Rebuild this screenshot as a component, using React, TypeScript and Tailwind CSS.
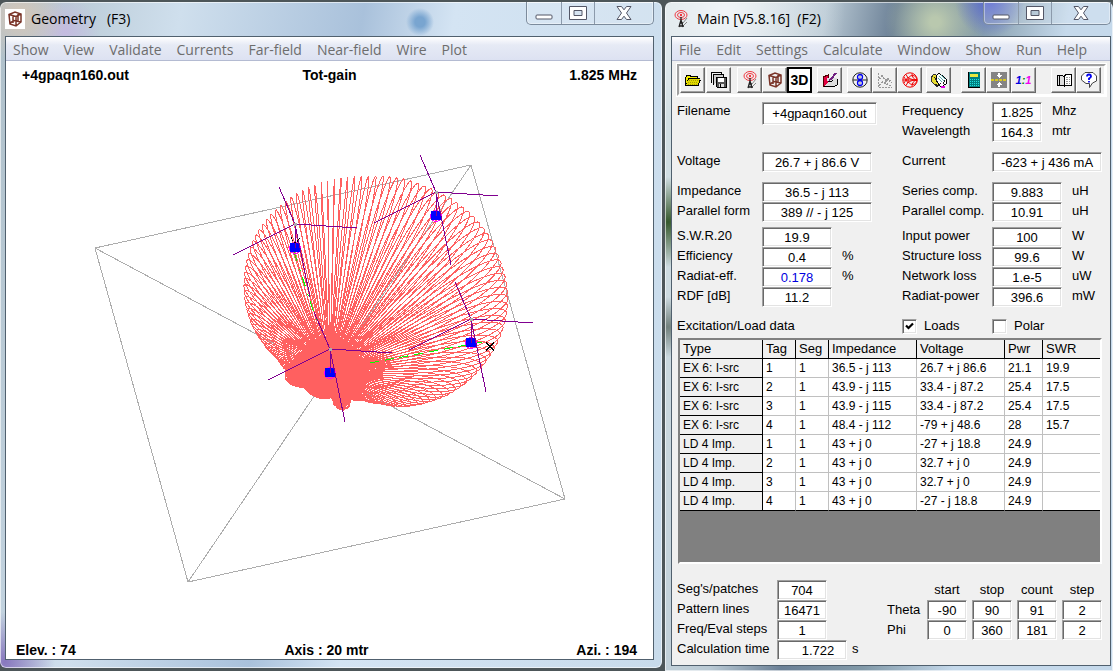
import { useId } from 'react';
import type { ReactNode } from 'react';

type Point = [number, number];

const ORIGIN: Point = [330, 373];

const OUTLINE: Point[] = [
  [508, 300], [505, 322], [497, 343], [485, 362], [470, 378], [452, 391], [430, 400], [408, 405],
  [385, 403], [365, 400], [351, 399], [349, 407], [343, 410], [336, 407], [331, 398], [314, 396],
  [304, 387], [291, 384], [285, 378], [286, 370], [277, 358], [262, 341], [250, 320], [244, 292],
  [246, 265], [254, 239], [268, 219], [285, 203], [304, 191], [330, 182], [352, 179], [380, 178],
  [405, 181], [430, 190], [452, 201], [473, 217], [490, 238], [501, 263], [507, 285],
];

const polar = OUTLINE.map(([x, y]) => {
  const dx = x - ORIGIN[0];
  const dy = ORIGIN[1] - y;
  return { a: (Math.atan2(dy, dx) * 180 / Math.PI + 360) % 360, r: Math.hypot(dx, dy) };
}).sort((p, q) => p.a - q.a);

function radiusAt(angle: number) {
  const n = polar.length;
  for (let i = 0; i < n; i++) {
    const p = polar[i];
    const q = polar[(i + 1) % n];
    const span = (q.a - p.a + 360) % 360;
    const off = (angle - p.a + 360) % 360;
    if (off <= span) return p.r + (q.r - p.r) * (off / (span || 1));
  }
  return polar[0].r;
}

function lobe(angle: number) {
  const r = radiusAt(angle);
  const a = (angle * Math.PI) / 180;
  let d = '';
  for (let i = 0; i <= 36; i++) {
    const t = (Math.PI * i) / 36;
    const along = Math.sin(t) * r;
    const lift = 0.14 * r * Math.sin(t) * Math.cos(t);
    const x = ORIGIN[0] + along * Math.cos(a);
    const y = ORIGIN[1] - along * Math.sin(a) - lift;
    d += `${i ? 'L' : 'M'}${x.toFixed(1)} ${y.toFixed(1)}`;
  }
  return d;
}

const LOBES = Array.from({ length: 180 }, (_, i) => lobe(i * 2 + 0.7)).join('');
const MASTS: Point[] = [[295, 224], [436, 192], [471, 319], [330, 349]];

function RadiationPlot() {
  return (
    <svg viewBox="6 89 647 552" className="mx-auto block h-[552px] w-[647px] shrink-0" shapeRendering="crispEdges" fill="none" role="img" aria-label="Total gain pattern">
      <path d="M95 248L471 165L565 499L188 582ZM95 248L565 499M471 165L188 582" stroke="#adadad" />
      <path d={LOBES} stroke="#ff6060" />
      <path d="M286 370L287 380L303 386L313 396L331 398L337 407L344 408L349 399L362 393L366 375L357 352L346 340L330 335L314 342L298 357Z" fill="#ff6060" />
      <path d="M294 252L317 322" stroke="#00ff00" strokeDasharray="10 8 2 6" />
      <path d="M370 363L488 341" stroke="#00ff00" strokeDasharray="9 6" />
      {MASTS.map(([x, y]) => (
        <g key={x}>
          <circle cx={x} cy={y + 24} r="5.5" stroke="#ff00ff" />
          <rect x={x - 5} y={y + 19} width="10" height="9" fill="#0000ff" />
          <path d={`M${x} ${y}l-16 -37M${x} ${y}l62 4M${x} ${y}l15 73M${x} ${y}l-62 31M${x} ${y}v24`} stroke="#800090" />
          <rect x={x - 1} y={y - 1} width="3" height="3" fill="#adadad" />
        </g>
      ))}
      <path d="M486 342L494 351M494 342L486 351" stroke="#000" strokeWidth="1.3" />
      <path d="M291 237v2l3 3h3l2-3v-2" stroke="#000" strokeDasharray="2 1" />
    </svg>
  );
}

function Cube() {
  return (
    <svg viewBox="0 0 16 16" className="h-4 w-4" fill="none" stroke="#7a3428" strokeWidth="1.5">
      <path d="M2 3.5L8 1l6 2v8l-5 4-6-2zM2 3.5L9 5.5l5-2.5M9 5.5V15M6 4v8M11 3v7M3 12l4-2.5L13.500 11" />
    </svg>
  );
}

function Antenna() {
  return (
    <svg viewBox="0 0 16 18" className="h-[18px] w-4" fill="none">
      <g stroke="#f03840">
        <ellipse cx="8" cy="5" rx="6" ry="4.500" />
        <ellipse cx="8" cy="5" rx="3.500" ry="2.500" />
        <path d="M8 4v2" strokeWidth="2" />
      </g>
      <path d="M8 7v4M8 10l-2 7M8 10l2 7M7 13h3M6 16h5" stroke="#222" strokeWidth="1.300" />
      <path d="M10 13l4-5M11 15l3-3" stroke="#888" />
    </svg>
  );
}

function Icon({ children }: { children: ReactNode }) {
  return <svg viewBox="0 0 16 16" className="h-4 w-4" fill="none" shapeRendering="crispEdges">{children}</svg>;
}

const FolderIcon = () => (
  <Icon>
    <path d="M1 3h5v1h7v2h2v2h1v1h-1v2h-1v3H0V5h1z" fill="#000" />
    <path d="M1 5h1V4h3v1h7v1H3v2H2v3H1z" fill="#f4ec00" />
    <path d="M4 7h11l-2 6H1l2-5z" fill="#e0d800" />
    <path d="M4 8.500h10M3 10.500h10M3 12.500h9" stroke="#a8a000" strokeDasharray="1 1" />
  </Icon>
);
const SaveAllIcon = () => (
  <Icon>
    <path d="M.5 10.500v-10h10v2" stroke="#000" strokeWidth="1.500" />
    <path d="M2.500 12.500v-10h10v2" stroke="#000" strokeWidth="1.500" fill="#ccc" />
    <path d="M5 5h10v10H6l-1-1z" fill="#555" stroke="#000" />
    <path d="M7 6h6v4H7z" fill="#fff" />
    <path d="M8 12h5v3H8z" fill="#ddd" />
    <path d="M9 12h1v3H9z" fill="#000" />
  </Icon>
);
const PenIcon = () => (
  <Icon>
    <path d="M1 5l5-2v9l-5 3z" fill="#e00040" stroke="#500000" />
    <path d="M5 6h10v7l-2 1H2l4-3z" fill="#ddd" />
    <path d="M15 7v6l-2 1M2 14.500h11" stroke="#000" />
    <path d="M14 1L9 7l-2 1" stroke="#702080" strokeWidth="2" />
    <path d="M6 9l3 1 2-2" stroke="#000" />
  </Icon>
);
const PolarIcon = () => (
  <svg viewBox="0 0 16 16" className="h-4 w-4" fill="none">
    <circle cx="8" cy="8" r="7.200" stroke="#222" />
    <path d="M1 8h14" stroke="#222" />
    <path d="M8 1v14" stroke="#999" />
    <circle cx="8" cy="5" r="2.500" stroke="#0000f0" strokeWidth="1.300" />
    <circle cx="8" cy="11" r="2.500" stroke="#0000f0" strokeWidth="1.300" />
  </svg>
);
const ChartIcon = () => (
  <Icon>
    <path d="M1 1v14h14" stroke="#999" strokeDasharray="2 1" />
    <path d="M2 7l3-3 4 5 2-2 4 4M2 13l4-3 4 2 5 2" stroke="#999" strokeWidth="1.500" strokeDasharray="2 1" />
  </Icon>
);
const SmithIcon = () => (
  <svg viewBox="0 0 16 16" className="h-4 w-4" fill="none" stroke="#f00000">
    <circle cx="8" cy="8" r="7.200" />
    <circle cx="10.500" cy="8" r="4.500" />
    <path d="M1 8h14M4 2.500Q6 8 15 8Q6 8 4 13.500M10 1.500Q10 7 15 8Q10 9 10 14.500M2 5l4 6M2 11l4-6" />
  </svg>
);
const CardsIcon = () => (
  <Icon>
    <path d="M0 6l3-4 5 3v8l-2 2-5-5z" fill="#e8dc30" stroke="#333" />
    <path d="M5 4l3-3 8 7-1 4-5 3-4-5z" fill="#fff" stroke="#000" />
    <path d="M8 4l5 5M7 6l4 4M10 3l4 4" stroke="#55aaaa" />
    <path d="M3 5l4 5M4 12l3 2 3-3M12 12l2-4" stroke="#222" />
    <path d="M10 15h4" stroke="#e000e0" strokeWidth="2" />
  </Icon>
);
const CalculatorIcon = () => (
  <Icon>
    <path d="M2 0h12v16H2z" fill="#008080" />
    <path d="M2.500 0v16M2 15.500h12" stroke="#000" />
    <path d="M4 2h8v3H4z" fill="#e8e840" />
    <path d="M4 7.500h9M4 9.500h9M4 11.500h9M4 13.500h9" stroke="#20e0e0" strokeDasharray="1 1" />
  </Icon>
);
const SplitIcon = () => (
  <Icon>
    <path d="M0 0h16v16H0z" fill="#848484" />
    <path d="M0 8h16" stroke="#d8c820" strokeWidth="1.500" strokeDasharray="3 1" />
    <path d="M7 1h2v2h2l-3 3-3-3h2zM7 15h2v-2h2l-3-3-3 3h2z" fill="#fff" />
  </Icon>
);
const BookIcon = () => (
  <Icon>
    <path d="M1 3h5l2 2v9l-2-1H1z" fill="#ddd" stroke="#000" />
    <path d="M8 5l2-3h5v11h-5l-2 2z" fill="#fff" stroke="#000" />
    <path d="M3.500 3v10" stroke="#000" />
    <path d="M10 5h4M10 7h4M10 9h4M10 11h4" stroke="#999" strokeDasharray="2 1" />
  </Icon>
);
const HelpIcon = () => (
  <svg viewBox="0 0 16 16" className="h-4 w-4" fill="none">
    <path d="M4 .5h8l3.500 3.500v5l-4 2-3 4.500V11.500H5L.5 8V4z" fill="#fff" stroke="#444" />
    <path d="M6 4.500Q6 2.500 8 2.500T10 4.500Q10 5.500 8 6.500V8M8 9v1.500" stroke="#0000f0" strokeWidth="1.800" />
  </svg>
);
const ThreeD = () => <span className="text-sm leading-4 font-bold">3D</span>;
const Ratio = () => (
  <span className="text-[11px] leading-4 font-bold italic">
    <span className="text-[#0000e0]">1</span><span className="text-[#008000]">:</span><span className="text-[#f000f0]">1</span>
  </span>
);

const TOOL_GROUPS: { gap: string; tools: { name: string; icon: ReactNode }[] }[] = [
  { gap: 'ml-0', tools: [{ name: 'Open', icon: <FolderIcon /> }] },
  { gap: 'ml-px', tools: [{ name: 'Save all', icon: <SaveAllIcon /> }] },
  { gap: 'ml-[6px]', tools: [{ name: 'Main', icon: <Antenna /> }, { name: 'Geometry', icon: <Cube /> }, { name: '3D view', icon: <ThreeD /> }] },
  { gap: 'ml-[5px]', tools: [{ name: 'Edit', icon: <PenIcon /> }] },
  { gap: 'ml-[5px]', tools: [{ name: 'Pattern', icon: <PolarIcon /> }, { name: 'Line chart', icon: <ChartIcon /> }, { name: 'Smith chart', icon: <SmithIcon /> }] },
  { gap: 'ml-1', tools: [{ name: 'Run', icon: <CardsIcon /> }] },
  { gap: 'ml-[10px]', tools: [{ name: 'Calculator', icon: <CalculatorIcon /> }, { name: 'Split', icon: <SplitIcon /> }, { name: 'Scale', icon: <Ratio /> }] },
  { gap: 'ml-[15px]', tools: [{ name: 'Notes', icon: <BookIcon /> }, { name: 'Help', icon: <HelpIcon /> }] },
];

function Toolbar() {
  return (
    <div className="mt-[3px] mr-1 ml-[5px] flex h-8 items-center border-2 border-[#a0a0a0] border-r-white border-b-white pl-px outline outline-white" role="toolbar">
      {TOOL_GROUPS.map((g, i) => (
        <div key={i} className={`flex ${g.gap}`}>
          {g.tools.map((t) => (
            <button
              key={t.name}
              type="button"
              aria-label={t.name}
              className={`flex h-[26px] w-[25px] items-center justify-center ${t.name === '3D view' ? 'border-2 border-black bg-white' : 'border border-white border-r-[#696969] border-b-[#696969] bg-[#f0f0f0] shadow-[inset_-1px_-1px_0_#a0a0a0]'}`}
            >
              {t.icon}
            </button>
          ))}
        </div>
      ))}
    </div>
  );
}

function CaptionButtons() {
  return (
    <div className="flex h-[23px] w-32 rounded-b-[5px] border border-t-0 border-[#7c8b9c] bg-white/15 shadow-[inset_0_0_0_1px_rgba(255,255,255,0.4)]">
      <button type="button" aria-label="Minimize" className="flex w-[35px] items-center justify-center border-r border-[#8c9aab]">
        <svg viewBox="0 0 18 14" className="h-[14px] w-[18px]"><rect x="1" y="9" width="16" height="4" rx="1" fill="#fff" stroke="#535666" /></svg>
      </button>
      <button type="button" aria-label="Maximize" className="flex w-[33px] items-center justify-center border-r border-[#8c9aab]">
        <svg viewBox="0 0 18 14" className="h-[14px] w-[18px]"><path fillRule="evenodd" d="M.5.5h17v13H.5zM5 4.500v5h8v-5z" fill="#fff" stroke="#535666" strokeLinejoin="round" /></svg>
      </button>
      <button type="button" aria-label="Close" className="flex flex-1 items-center justify-center">
        <svg viewBox="0 0 16 14" className="h-[14px] w-4"><path d="M1 .5h4.500L8 3.800 10.500.5H15L10.500 7l4.500 6.500h-4.500L8 10.200 5.500 13.500H1L5.500 7z" fill="#fff" stroke="#535666" strokeLinejoin="round" /></svg>
      </button>
    </div>
  );
}

function TitleBar({ icon, title, hotkey }: { icon: ReactNode; title: string; hotkey: string }) {
  return (
    <header className="flex h-[34px] justify-between">
      <div className="flex items-center">
        {icon}
        <h1 className="ml-[6px] font-['Open_Sans','Noto_Sans',sans-serif] text-sm whitespace-pre text-black">{title}{hotkey}</h1>
      </div>
      <CaptionButtons />
    </header>
  );
}

function MenuBar({ items }: { items: string[] }) {
  return (
    <nav className="flex h-6 items-center gap-[15px] border-b border-[#b4bbd2] bg-linear-to-b from-white from-0% via-[#e6eaf5] via-35% to-[#dde2f2] pt-0.5 pl-[7px] font-['Open_Sans','Noto_Sans',sans-serif] text-sm text-[#6d6d6d]">
      {items.map((m) => <button key={m} type="button" className="whitespace-nowrap">{m}</button>)}
    </nav>
  );
}

const INSET = 'border border-[#a0a0a0] border-r-white border-b-white bg-white shadow-[inset_1px_1px_0_#696969,inset_-1px_-1px_0_#e3e3e3]';

function Value({ id, value, size, label }: { id?: string; value: string; size: string; label?: string }) {
  return <input id={id} aria-label={label} readOnly value={value} className={`${INSET} ${size} text-center outline-none ${value === '0.178' ? 'text-[#0000e0]' : ''}`} />;
}

type Row = { label: string; value: string; size: string; unit?: string; gap?: string };

function Rows({ rows, labelWidth }: { rows: Row[]; labelWidth: string }) {
  const base = useId();
  return (
    <div>
      {rows.map((r, i) => (
        <div key={r.label} className={`flex h-5 ${r.gap ?? ''}`}>
          <label htmlFor={`${base}${i}`} className={`${labelWidth} shrink-0 leading-[18px] whitespace-nowrap`}>{r.label}</label>
          <Value id={`${base}${i}`} value={r.value} size={r.size} />
          {r.unit && <span className={`leading-[18px] ${r.unit === 's' ? 'ml-[5px]' : 'ml-[10px]'}`}>{r.unit}</span>}
        </div>
      ))}
    </div>
  );
}

const LEFT_ROWS: Row[] = [
  { label: 'Filename', value: '+4gpaqn160.out', size: 'h-[23px] w-[115px]' },
  { label: 'Voltage', value: '26.7 + j 86.6 V', size: 'h-5 w-[110px]', gap: 'mt-[30px]' },
  { label: 'Impedance', value: '36.5 - j 113', size: 'h-5 w-[110px]', gap: 'mt-[10px]' },
  { label: 'Parallel form', value: '389 // - j 125', size: 'h-5 w-[110px]' },
  { label: 'S.W.R.20', value: '19.9', size: 'h-5 w-[70px]', gap: 'mt-[5px]' },
  { label: 'Efficiency', value: '0.4', size: 'h-5 w-[70px]', unit: '%' },
  { label: 'Radiat-eff.', value: '0.178', size: 'h-5 w-[70px]', unit: '%' },
  { label: 'RDF [dB]', value: '11.2', size: 'h-5 w-[70px]' },
];
const RIGHT_ROWS: Row[] = [
  { label: 'Frequency', value: '1.825', size: 'h-5 w-[50px]', unit: 'Mhz' },
  { label: 'Wavelength', value: '164.3', size: 'h-5 w-[50px]', unit: 'mtr' },
  { label: 'Current', value: '-623 + j 436 mA', size: 'h-5 w-[110px]', gap: 'mt-[10px]' },
  { label: 'Series comp.', value: '9.883', size: 'h-5 w-[70px]', unit: 'uH', gap: 'mt-[10px]' },
  { label: 'Parallel comp.', value: '10.91', size: 'h-5 w-[70px]', unit: 'uH' },
  { label: 'Input power', value: '100', size: 'h-5 w-[70px]', unit: 'W', gap: 'mt-[5px]' },
  { label: 'Structure loss', value: '99.6', size: 'h-5 w-[70px]', unit: 'W' },
  { label: 'Network loss', value: '1.e-5', size: 'h-5 w-[70px]', unit: 'uW' },
  { label: 'Radiat-power', value: '396.6', size: 'h-5 w-[70px]', unit: 'mW' },
];
const STAT_ROWS: Row[] = [
  { label: "Seg's/patches", value: '704', size: 'h-5 w-[50px]' },
  { label: 'Pattern lines', value: '16471', size: 'h-5 w-[50px]' },
  { label: 'Freq/Eval steps', value: '1', size: 'h-5 w-[50px]' },
  { label: 'Calculation time', value: '1.722', size: 'h-5 w-[70px] pl-3', unit: 's' },
];

const HEAD = ['Type', 'Tag', 'Seg', 'Impedance', 'Voltage', 'Pwr', 'SWR'];
const DATA = [
  ['EX 6: I-src', '1', '1', '36.5 - j 113', '26.7 + j 86.6', '21.1', '19.9'],
  ['EX 6: I-src', '2', '1', '43.9 - j 115', '33.4 - j 87.2', '25.4', '17.5'],
  ['EX 6: I-src', '3', '1', '43.9 - j 115', '33.4 - j 87.2', '25.4', '17.5'],
  ['EX 6: I-src', '4', '1', '48.4 - j 112', '-79 + j 48.6', '28', '15.7'],
  ['LD 4 Imp.', '1', '1', '43 + j 0', '-27 + j 18.8', '24.9', ''],
  ['LD 4 Imp.', '2', '1', '43 + j 0', '32.7 + j 0', '24.9', ''],
  ['LD 4 Imp.', '3', '1', '43 + j 0', '32.7 + j 0', '24.9', ''],
  ['LD 4 Imp.', '4', '1', '43 + j 0', '-27 - j 18.8', '24.9', ''],
];

function LoadTable() {
  return (
    <div className="mt-px mr-2 ml-[6px] h-[226px] border-2 border-[#808080] border-r-white border-b-white bg-[#808080]">
      <table className="w-full table-fixed border-separate border-spacing-0 bg-white text-left">
        <colgroup>
          <col className="w-[83px]" /><col className="w-[33px]" /><col className="w-[33px]" />
          <col className="w-[88px]" /><col className="w-[88px]" /><col className="w-[38px]" /><col />
        </colgroup>
        <thead>
          <tr className="h-[19px]">
            {HEAD.map((h) => <th key={h} className="border-r border-b border-black bg-[#f0f0f0] p-0 pl-[3px] text-[13px] leading-[18px] font-normal last:border-r-0">{h}</th>)}
          </tr>
        </thead>
        <tbody>
          {DATA.map((row, i) => (
            <tr key={i} className="group h-[19px]">
              <th scope="row" className="border-r border-b border-black bg-[#f0f0f0] p-0 pl-[3px] text-xs leading-[18px] font-normal">{row[0]}</th>
              {row.slice(1).map((c, j) => <td key={j} className="border-r border-b border-[#c0c0c0] p-0 pl-[3px] text-xs leading-[18px] whitespace-nowrap group-last:border-b-black last:border-r-0">{c}</td>)}
            </tr>
          ))}
        </tbody>
      </table>
    </div>
  );
}

function Check({ label, on }: { label: string; on?: boolean }) {
  return (
    <label className="flex w-[90px] items-center gap-[7px]">
      <span className="grid">
        <input type="checkbox" defaultChecked={on} className={`peer col-start-1 row-start-1 h-[15px] w-[15px] appearance-none ${INSET}`} />
        <svg viewBox="0 0 15 15" className="pointer-events-none invisible col-start-1 row-start-1 h-[15px] w-[15px] peer-checked:visible"><path d="M4 6.500l2.500 2.500L11 4.500" fill="none" stroke="#000" strokeWidth="2.200" /></svg>
      </span>
      {label}
    </label>
  );
}

const RANGE = [
  { name: 'Theta', values: ['-90', '90', '91', '2'] },
  { name: 'Phi', values: ['0', '360', '181', '2'] },
];
const RANGE_HEAD = ['start', 'stop', 'count', 'step'];

function RangeGrid() {
  return (
    <div className="mr-2 grid grid-cols-[35px_repeat(4,40px)] grid-rows-[20px_20px_20px] gap-x-[5px]">
      <span />
      {RANGE_HEAD.map((h) => <span key={h} className="text-center leading-5">{h}</span>)}
      {RANGE.map((r) => [
        <span key={r.name} className="leading-5">{r.name}</span>,
        ...r.values.map((v, i) => <Value key={r.name + i} label={`${r.name} ${RANGE_HEAD[i]}`} value={v} size="h-5 w-10" />),
      ])}
    </div>
  );
}

export default function App() {
  return (
    <div className="flex min-h-screen gap-[3px] bg-[#4d5659] pt-[2px] font-['Liberation_Sans',Arial,sans-serif] text-[13px] text-black">
      <section className="mb-[3px] flex min-w-0 flex-1 flex-col rounded-t-md rounded-b-md bg-[#bdcddd] bg-[radial-gradient(circle_at_20px_15px,#d6c7b8_0px,transparent_45px),radial-gradient(circle_at_65px_30px,#c4bbe0_0px,transparent_35px),radial-gradient(circle_at_420px_20px,#79a5d0_5px,transparent_14px),radial-gradient(circle_at_5px_660px,#8878be_0px,transparent_50px),linear-gradient(100deg,#aebfc9_0px,#cfdfed_180px,#a9c1db_360px,#d4e4f3_450px,#c8dbeb_100%)] pr-2 pb-2 pl-[5px] shadow-[inset_0_0_0_1px_rgba(255,255,255,0.6)]">
        <TitleBar icon={<span className="flex h-5 w-5 items-center justify-center bg-white"><Cube /></span>} title="Geometry" hotkey="   (F3)" />
        <div className="flex flex-1 flex-col border border-[#50606e] bg-white">
          <MenuBar items={['Show', 'View', 'Validate', 'Currents', 'Far-field', 'Near-field', 'Wire', 'Plot']} />
          <div className="grid h-7 grid-cols-3 items-center px-4 text-sm font-bold">
            <span>+4gpaqn160.out</span><span className="text-center">Tot-gain</span><span className="text-right">1.825 MHz</span>
          </div>
          <div className="flex flex-1 overflow-hidden"><RadiationPlot /></div>
          <div className="grid h-[18px] grid-cols-3 items-center pr-4 pl-[10px] text-sm leading-[18px] font-bold">
            <span>Elev. : 74</span><span className="text-center">Axis : 20 mtr</span><span className="text-right">Azi. : 194</span>
          </div>
        </div>
      </section>

      <section className="flex w-[448px] shrink-0 flex-col rounded-t-md bg-[#c5d8e8] bg-[radial-gradient(circle_at_60px_10px,#f1f5f8_0px,transparent_120px),radial-gradient(circle_at_325px_0px,#5868cf_0px,transparent_35px),radial-gradient(circle_at_270px_20px,#b9c8ae_5px,transparent_50px),radial-gradient(circle_at_3px_220px,#35582b_0px,transparent_45px),radial-gradient(circle_at_3px_325px,#71807c_0px,transparent_30px),linear-gradient(100deg,#d7e3e6_0px,#b9c9d4_160px,#6b8096_230px,#8199a8_310px,#c5d9eb_400px)] pr-[2px] pb-[5px] pl-[6px] shadow-[inset_0_0_0_1px_rgba(255,255,255,0.6)]">
        <TitleBar icon={<span className="flex h-5 w-5 items-center justify-center"><Antenna /></span>} title="Main [V5.8.16]" hotkey="  (F2)" />
        <div className="flex flex-1 flex-col border border-[#50606e] bg-[#f0f0f0]">
          <MenuBar items={['File', 'Edit', 'Settings', 'Calculate', 'Window', 'Show', 'Run', 'Help']} />
          <Toolbar />
          <div className="mt-[6px] flex pl-[5px]">
            <div className="w-[225px] shrink-0"><Rows rows={LEFT_ROWS} labelWidth="w-[85px]" /></div>
            <Rows rows={RIGHT_ROWS} labelWidth="w-[90px]" />
          </div>
          <div className="mt-2 flex h-[22px] items-center pl-[5px]">
            <h2 className="w-[225px] shrink-0">Excitation/Load data</h2>
            <Check label="Loads" on /><Check label="Polar" />
          </div>
          <LoadTable />
          <div className="mt-4 flex justify-between pl-[5px]">
            <Rows rows={STAT_ROWS} labelWidth="w-[100px]" />
            <RangeGrid />
          </div>
        </div>
      </section>
    </div>
  );
}
